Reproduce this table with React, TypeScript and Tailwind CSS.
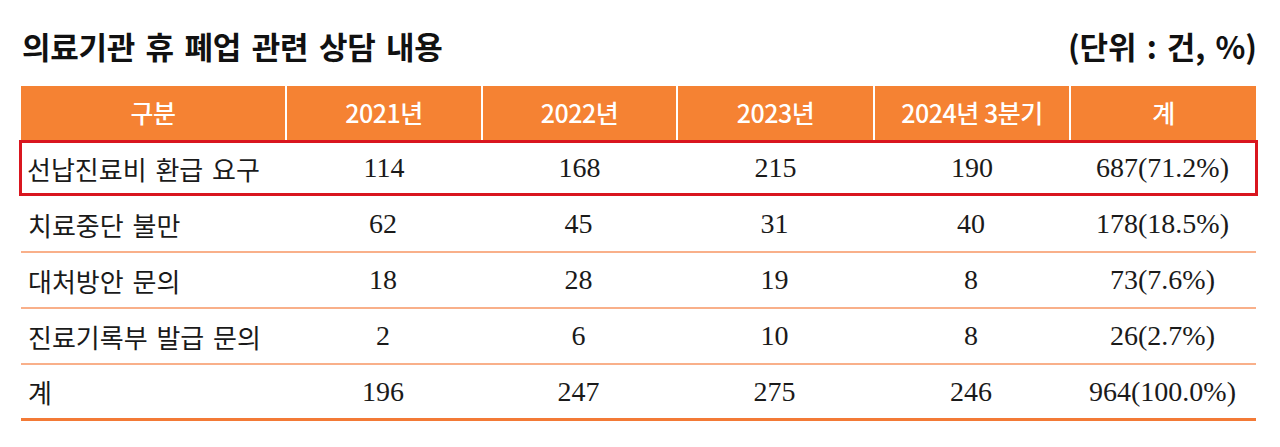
import React from 'react';

const rows = [
  { label: '선납진료비 환급 요구', values: ['114', '168', '215', '190', '687(71.2%)'], highlight: true },
  { label: '치료중단 불만', values: ['62', '45', '31', '40', '178(18.5%)'] },
  { label: '대처방안 문의', values: ['18', '28', '19', '8', '73(7.6%)'] },
  { label: '진료기록부 발급 문의', values: ['2', '6', '10', '8', '26(2.7%)'] },
  { label: '계', values: ['196', '247', '275', '246', '964(100.0%)'] },
];

const headers = ['구분', '2021년', '2022년', '2023년', '2024년 3분기', '계'];

const gothic = "font-['Noto_Sans_CJK_KR','Noto_Sans',sans-serif]";
const serif = "font-['Liberation_Serif','Noto_Sans_CJK_KR',serif]";

const cols = 'grid grid-cols-[264px_196px_195px_197px_196px_1fr]';

export default function App() {
  return (
    <div className="w-[1280px] h-[447px] bg-white pl-[21px] pr-[24px] pt-[24px]">
      {/* 제목 */}
      <div className="flex items-center justify-between h-[44px]">
        <h1 className={`${gothic} pl-[1px] text-[31px] leading-[44px] font-bold text-[#111] tracking-[-0.3px] [word-spacing:4px]`}>
          의료기관 휴 폐업 관련 상담 내용
        </h1>
        <span className={`${gothic} text-[31px] leading-[44px] font-bold text-[#111] -mr-[1px] [word-spacing:3px]`}>
          (단위 : 건, %)
        </span>
      </div>

      <div className="mt-[18px]">
        {/* 헤더 */}
        <div className={`${cols} h-[54px] bg-[#f58233]`}>
          {headers.map((h, i) => (
            <div
              key={h}
              className={`${gothic} flex items-center justify-center text-white text-[25px] font-medium tracking-[-0.5px] ${
                i > 0 ? 'border-l-2 border-white' : ''
              }`}
            >
              {h}
            </div>
          ))}
        </div>

        {/* 본문 */}
        {rows.map((r, idx) => (
          <div
            key={r.label}
            className={`${cols} h-[56px] ${
              r.highlight
                ? 'border-[3px] border-[#d9161f] -mx-[2px] mb-[1px]'
                : idx === rows.length - 1
                  ? 'border-b-[3px] border-[#f37a36]'
                  : 'border-b-2 border-[#f9b08a]'
            }`}
          >
            <div
              className={`${gothic} flex items-center ${
                r.highlight ? 'pl-[5px]' : 'pl-[7px]'
              } text-[26px] font-normal text-[#1a1a1a] [word-spacing:3px]`}
            >
              {r.label}
            </div>
            {r.values.map((v, i) => (
              <div
                key={i}
                className={`${serif} flex items-center justify-center text-[28px] text-[#1a1a1a]`}
              >
                {v}
              </div>
            ))}
          </div>
        ))}
      </div>
    </div>
  );
}
